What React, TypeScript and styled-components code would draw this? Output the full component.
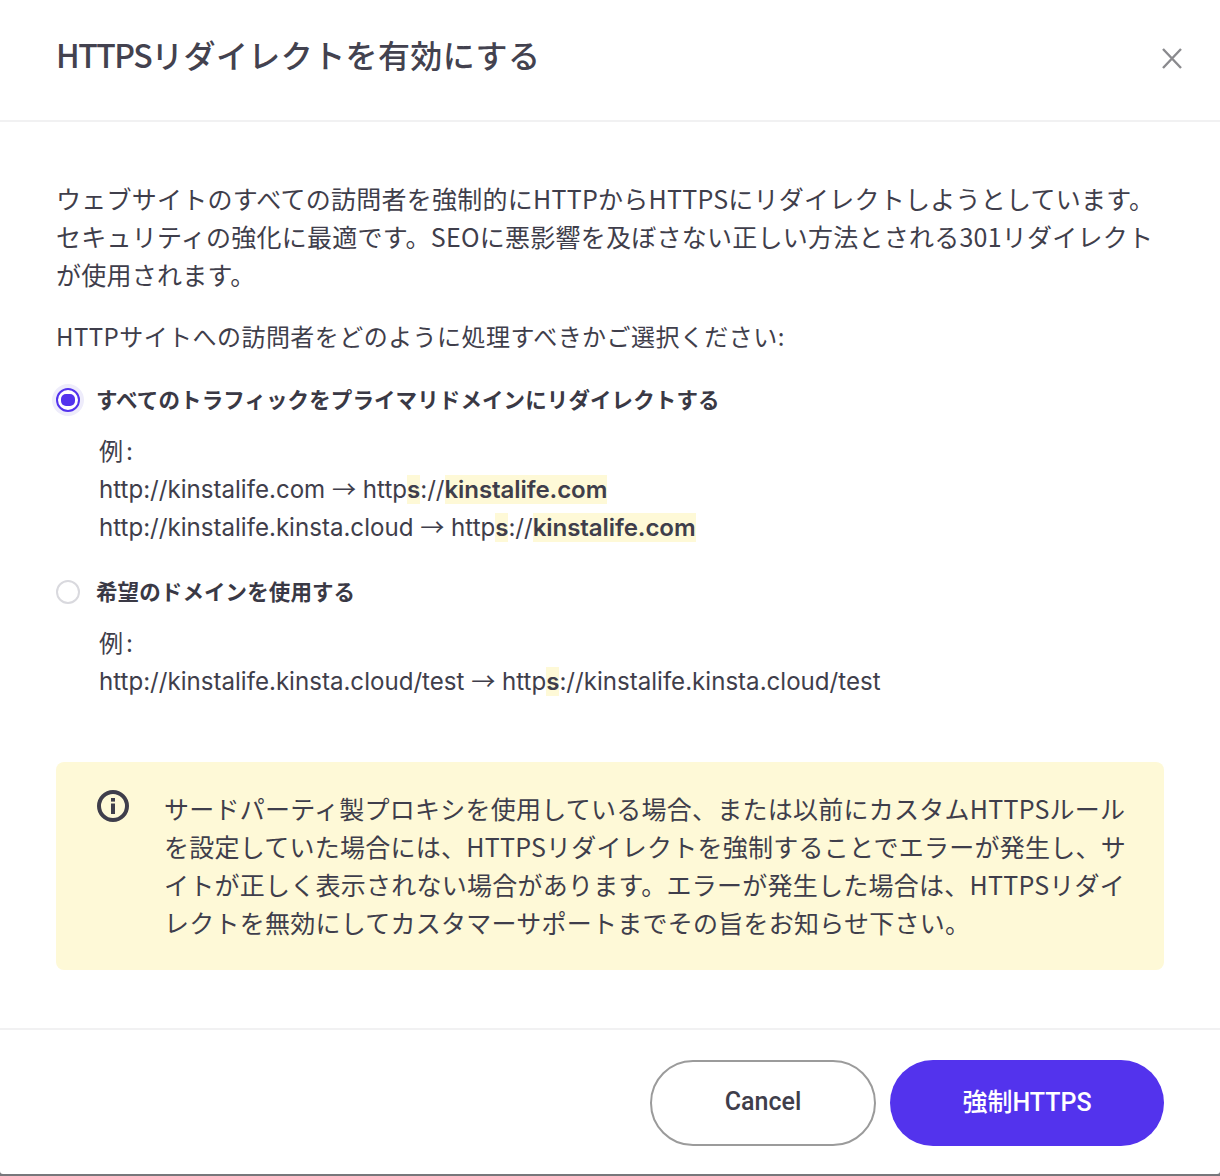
import React from "react";
import styled, { createGlobalStyle } from "styled-components";

const GlobalStyle = createGlobalStyle`
  html, body {
    margin: 0;
    padding: 0;
    background: #77777b;
  }
  body {
    font-family: "Noto Sans CJK JP", sans-serif;
    color: #3f3e4b;
  }
`;

const Modal = styled.div`
  width: 1220px;
  height: 1174px;
  box-sizing: border-box;
  display: flex;
  flex-direction: column;
  border-radius: 0 0 3px 3px;
  background: #fff;
`;

const Header = styled.header`
  height: 122px;
  box-sizing: border-box;
  display: flex;
  justify-content: space-between;
  padding: 32px 37px 0 56px;
  border-bottom: 2px solid #f1f1f2;
`;

const Title = styled.h1`
  margin: 0;
  font-size: 32px;
  line-height: 44px;
  font-weight: 500;
  letter-spacing: 0.4px;
  color: #43424f;
`;

const TitleLatin = styled.span`
  letter-spacing: -1.5px;
`;

const CloseButton = styled.button`
  width: 22px;
  height: 22px;
  margin-top: 16px;
  padding: 0;
  border: none;
  background: none;
`;

const Body = styled.main`
  flex: 1;
  padding: 57px 56px 0;
`;

const Paragraph = styled.p`
  margin: 0 0 24px;
  font-size: 25px;
  line-height: 38px;
  letter-spacing: 0.25px;
  color: #3f3e4b;
`;

const Question = styled.p`
  margin: 0 0 31px;
  font-size: 24px;
  line-height: 38px;
  letter-spacing: 0.45px;
  color: #3f3e4b;
`;

const OptionRow = styled.label`
  display: flex;
  align-items: center;
  gap: 16px;
  height: 28px;
  font-size: 21.5px;
  font-weight: 700;
  letter-spacing: 0.1px;
  color: #3a3945;
`;

const OptionText = styled.span`
  padding-bottom: 4px;
`;

const Radio = styled.span<{ $checked?: boolean }>`
  width: 24px;
  height: 24px;
  box-sizing: border-box;
  flex: none;
  display: flex;
  align-items: center;
  justify-content: center;
  border-radius: 50%;
  background: #fff;
  border: 2px solid ${(p) => (p.$checked ? "#5333ed" : "#d9d9de")};
  box-shadow: ${(p) => (p.$checked ? "0 0 0 4px #eeecfb" : "none")};
`;

const RadioDot = styled.span`
  width: 14px;
  height: 12px;
  border-radius: 5px;
  background: #5333ed;
`;

const Example = styled.div`
  margin: 19px 0 31px 43px;
  font-family: Inter, "Noto Sans CJK JP", sans-serif;
  font-size: 24.1px;
  line-height: 38px;
  color: #3f3e4b;
`;

const Colon = styled.span`
  margin-left: 3px;
`;

const Arrow = styled.span`
  font-family: "Noto Sans CJK JP", sans-serif;
  line-height: 0;
`;

const Mark = styled.span`
  background: #fef9d7;
  font-weight: 600;
  letter-spacing: -0.1px;
`;

const Notice = styled.aside`
  display: flex;
  gap: 35px;
  margin-top: 61px;
  height: 208px;
  box-sizing: border-box;
  padding: 28px 36px 0 41px;
  border-radius: 8px;
  background: #fef9d7;
`;

const NoticeIcon = styled.svg`
  width: 32px;
  height: 32px;
  flex: none;
  color: #3f3e4b;
`;

const NoticeText = styled.p`
  margin: -1px 0 0;
  font-size: 25px;
  line-height: 38px;
  letter-spacing: 0.25px;
  color: #3f3e4b;
`;

const Footer = styled.footer`
  height: 146px;
  box-sizing: border-box;
  display: flex;
  justify-content: flex-end;
  gap: 14px;
  padding: 30px 56px 0;
  border-top: 2px solid #f1f1f2;
`;

const Button = styled.button<{ $primary?: boolean }>`
  height: 86px;
  width: ${(p) => (p.$primary ? "274px" : "226px")};
  box-sizing: border-box;
  padding: 0 0 ${(p) => (p.$primary ? "6px" : "4px")};
  border-radius: 43px;
  font-family: Roboto, "Noto Sans CJK JP", sans-serif;
  font-size: 25px;
  font-weight: 500;
  color: ${(p) => (p.$primary ? "#fff" : "#3f3e4b")};
  background: ${(p) => (p.$primary ? "#5333ed" : "#fff")};
  border: ${(p) => (p.$primary ? "none" : "2px solid #9b9b9b")};
`;

export default function App() {
  return (
    <>
      <GlobalStyle />
      <Modal>
        <Header>
          <Title>
            <TitleLatin>HTTPS</TitleLatin>リダイレクトを有効にする
          </Title>
          <CloseButton aria-label="close">
            <svg width="22" height="22" viewBox="0 0 22 22" fill="none">
              <path d="M2 1l18 19M20 1L2 20" stroke="#8a8a8e" strokeWidth="2.4" />
            </svg>
          </CloseButton>
        </Header>
        <Body>
          <Paragraph>
            ウェブサイトのすべての訪問者を強制的にHTTPからHTTPSにリダイレクトしようとしています。セキュリティの強化に最適です。SEOに悪影響を及ぼさない正しい方法とされる301リダイレクトが使用されます。
          </Paragraph>
          <Question>HTTPサイトへの訪問者をどのように処理すべきかご選択ください:</Question>
          <OptionRow>
            <Radio $checked>
              <RadioDot />
            </Radio>
            <OptionText>すべてのトラフィックをプライマリドメインにリダイレクトする</OptionText>
          </OptionRow>
          <Example>
            例<Colon>:</Colon>
            <br />
            http://kinstalife.com <Arrow>→</Arrow> http<Mark>s</Mark>://<Mark>kinstalife.com</Mark>
            <br />
            http://kinstalife.kinsta.cloud <Arrow>→</Arrow> http<Mark>s</Mark>://<Mark>kinstalife.com</Mark>
          </Example>
          <OptionRow>
            <Radio />
            <OptionText>希望のドメインを使用する</OptionText>
          </OptionRow>
          <Example>
            例<Colon>:</Colon>
            <br />
            http://kinstalife.kinsta.cloud/test <Arrow>→</Arrow> http<Mark>s</Mark>://kinstalife.kinsta.cloud/test
          </Example>
          <Notice>
            <NoticeIcon viewBox="0 0 32 32" fill="none">
              <circle cx="16" cy="16" r="14" stroke="currentColor" strokeWidth="4" />
              <rect x="14" y="13.5" width="4" height="10.5" fill="currentColor" />
              <rect x="14" y="8" width="4" height="3.6" fill="currentColor" />
            </NoticeIcon>
            <NoticeText>
              サードパーティ製プロキシを使用している場合、または以前にカスタムHTTPSルールを設定していた場合には、HTTPSリダイレクトを強制することでエラーが発生し、サイトが正しく表示されない場合があります。エラーが発生した場合は、HTTPSリダイレクトを無効にしてカスタマーサポートまでその旨をお知らせ下さい。
            </NoticeText>
          </Notice>
        </Body>
        <Footer>
          <Button>Cancel</Button>
          <Button $primary>強制HTTPS</Button>
        </Footer>
      </Modal>
    </>
  );
}
